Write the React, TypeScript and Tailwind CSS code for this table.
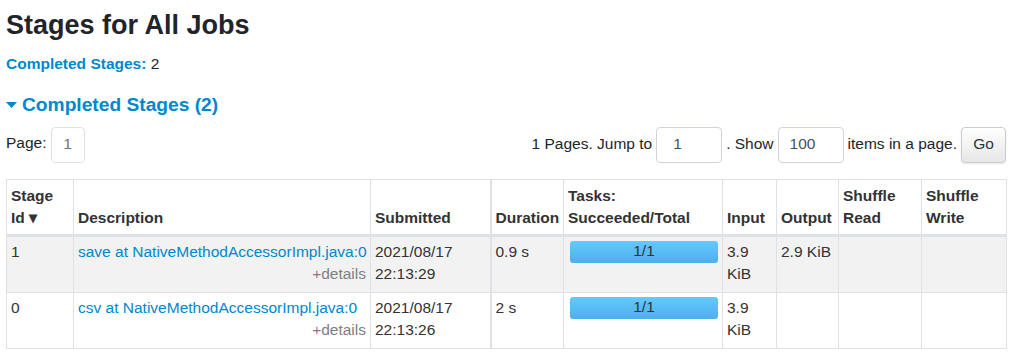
const rows = [
  {
    id: "1",
    desc: "save at NativeMethodAccessorImpl.java:0",
    date: "2021/08/17",
    time: "22:13:29",
    duration: "0.9 s",
    tasks: "1/1",
    input: "3.9 KiB",
    output: "2.9 KiB",
  },
  {
    id: "0",
    desc: "csv at NativeMethodAccessorImpl.java:0",
    date: "2021/08/17",
    time: "22:13:26",
    duration: "2 s",
    tasks: "1/1",
    input: "3.9 KiB",
    output: "",
  },
];

const th = "border border-[#dee2e6] px-[4px] pt-[5px] pb-[4px] align-bottom text-left font-bold text-[#333]";
const td = "border border-[#dee2e6] px-[4px] pt-[4px] pb-[6px] align-top";

export default function App() {
  return (
    <div
      className="pl-[6px] pr-[11px] text-[15.5px] leading-[22.5px] text-[#212529] bg-white min-h-screen"
      style={{ fontFamily: '"Liberation Sans", Arial, sans-serif' }}
    >
      <h3 className="pt-[8px] text-[27px] leading-[34px] font-bold text-[#212529]">
        Stages for All Jobs
      </h3>

      <div className="mt-[11px]">
        <span className="font-bold text-[#0088cc]">Completed Stages:</span> 2
      </div>

      <h4 className="mt-[17px] flex items-center text-[19.2px] leading-[24px] font-bold text-[#0088cc]">
        <svg width="11" height="7" viewBox="0 0 11 7" className="mr-[5px] mt-[1px]">
          <path d="M0 0 L11 0 L5.5 6 Z" fill="#0088cc" />
        </svg>
        Completed Stages (2)
      </h4>

      <div className="mt-[10px] flex items-center justify-between">
        <div className="flex items-center gap-[4px]">
          <span className="-mt-[3px]">Page:</span>
          <span className="flex h-[36px] w-[34px] items-center justify-center rounded-[4px] border border-[#dee2e6] text-[#6c757d]">
            1
          </span>
        </div>
        <div className="flex items-center gap-[4px]">
          <span>1 Pages. Jump to</span>
          <span className="flex h-[36px] w-[66px] items-center rounded-[4px] border border-[#ced4da] pl-[16px] text-[#495057]">
            1
          </span>
          <span>. Show</span>
          <span className="flex h-[36px] w-[66px] items-center rounded-[4px] border border-[#ced4da] pl-[11px] text-[#495057]">
            100
          </span>
          <span>items in a page.</span>
          <button className="h-[36px] w-[45px] rounded-[4px] border border-[#cccccc] bg-gradient-to-b from-white to-[#e6e6e6] text-[#333] shadow-[0_1px_2px_rgba(0,0,0,0.1)]">
            Go
          </button>
        </div>
      </div>

      <table className="mt-[16px] w-[1000px] table-fixed border-collapse text-[#333]">
        <colgroup>
          <col className="w-[67px]" />
          <col className="w-[297px]" />
          <col className="w-[120px]" />
          <col className="w-[73px]" />
          <col className="w-[159px]" />
          <col className="w-[54px]" />
          <col className="w-[62px]" />
          <col className="w-[83px]" />
          <col className="w-[85px]" />
        </colgroup>
        <thead>
          <tr className="border-b-[3px] border-[#dee2e6]">
            <th className={th}>Stage Id ▾</th>
            <th className={th}>Description</th>
            <th className={th}>Submitted</th>
            <th className={th + " border-l-2"}>Duration</th>
            <th className={th}>Tasks: Succeeded/Total</th>
            <th className={th}>Input</th>
            <th className={th}>Output</th>
            <th className={th}>Shuffle Read</th>
            <th className={th}>Shuffle Write</th>
          </tr>
        </thead>
        <tbody>
          {rows.map((r, i) => (
            <tr key={r.id} className={i === 0 ? "bg-[#f2f2f2]" : "bg-white"}>
              <td className={td}>{r.id}</td>
              <td className={td}>
                <div className="text-[#0088cc] whitespace-nowrap">{r.desc}</div>
                <div className="text-right text-[#808080]">+details</div>
              </td>
              <td className={td}>
                {r.date}
                <br />
                {r.time}
              </td>
              <td className={td + " border-l-2"}>{r.duration}</td>
              <td className={td + " pr-[4px] pl-[6px]"}>
                <div className="flex h-[22px] items-center justify-center rounded-[3px] bg-gradient-to-b from-[#66c9fc] to-[#4eaeee] text-[#333]">
                  {r.tasks}
                </div>
              </td>
              <td className={td}>{r.input}</td>
              <td className={td}>{r.output}</td>
              <td className={td}></td>
              <td className={td}></td>
            </tr>
          ))}
        </tbody>
      </table>
    </div>
  );
}
